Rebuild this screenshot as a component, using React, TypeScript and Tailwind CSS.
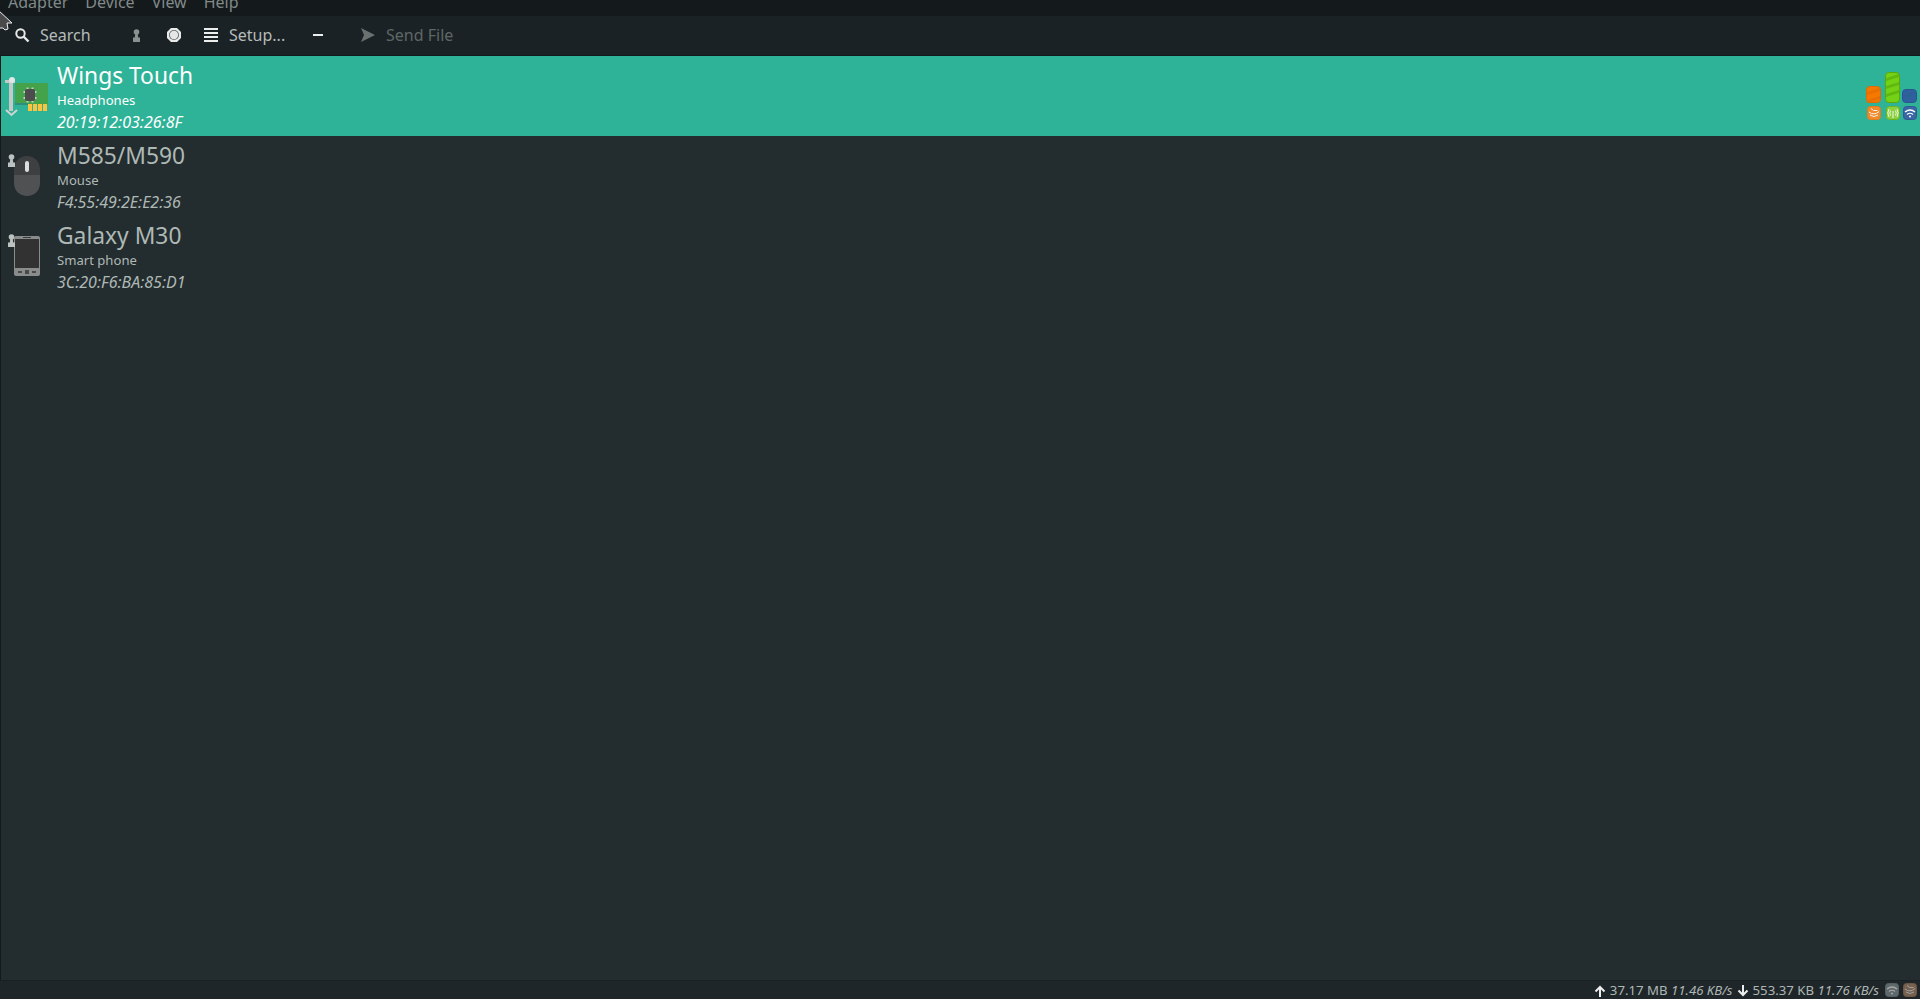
import React from "react";

const devices = [
  { name: "M585/M590", kind: "Mouse", mac: "F4:55:49:2E:E2:36", icon: "mouse" },
  { name: "Galaxy M30", kind: "Smart phone", mac: "3C:20:F6:BA:85:D1", icon: "phone" },
];

const Keyhole = ({ fill = "#b9c0bd" }: { fill?: string }) => (
  <svg width="7" height="13" viewBox="0 0 7 13" className="block">
    <circle cx="3.5" cy="3" r="2.8" fill={fill} />
    <path d="M2.400 4h2.200l.6 4.500H7V13H0V8.500h1.800z" fill={fill} />
  </svg>
);

const CardIcon = () => (
  <svg width="44" height="44" viewBox="0 0 44 44" className="block">
    <rect x="10" y="9" width="33" height="22" fill="#43a24a" />
    <rect x="10" y="29" width="13" height="2" fill="#2f8f7a" />
    <path d="M0 6h10v3H8v28H4V9H0z" fill="#c4c9c7" />
    <circle cx="7" cy="6" r="3" fill="#e3e6e4" />
    <path d="M1 36l5.500 5 5.500-5" fill="none" stroke="#cfd4d2" strokeWidth="2" />
    <g fill="#c3cfc0">
      <rect x="21.500" y="13.500" width="2" height="15" />
      <rect x="26.500" y="13.500" width="2" height="15" />
      <rect x="18.500" y="17" width="13" height="2" />
      <rect x="18.500" y="23" width="13" height="2" />
    </g>
    <rect x="20" y="15" width="10" height="12" rx="2" fill="#4c4c4e" />
    <g fill="#fcc43e">
      <rect x="23" y="30" width="4" height="7" />
      <rect x="28" y="30" width="4" height="7" />
      <rect x="33" y="30" width="4" height="7" />
      <rect x="38" y="30" width="4" height="7" />
    </g>
  </svg>
);

const MouseIcon = () => (
  <svg width="26" height="40" viewBox="0 0 26 40" className="block">
    <path d="M0 14C0 5 6 0 13 0s13 5 13 14v5H0z" fill="#3e3f41" />
    <path d="M0 19h26v8c0 8-6 13-13 13S0 35 0 27z" fill="#505153" />
    <rect x="11" y="5" width="4" height="11" rx="2" fill="#dcdedd" />
  </svg>
);

const PhoneIcon = () => (
  <svg width="26" height="40" viewBox="0 0 26 40" className="block">
    <rect width="26" height="40" rx="2" fill="#8a8c8c" />
    <rect x="1" y="3" width="24" height="29" fill="#323232" />
    <rect x="9" y="1" width="8" height="1" fill="#3a3a3a" />
    <rect x="4" y="35" width="4" height="2" fill="#4a4a4a" />
    <rect x="11" y="34" width="4" height="4" fill="#4a4a4a" />
    <rect x="18" y="35" width="4" height="2" fill="#4a4a4a" />
  </svg>
);

const Bar = ({ h, fill, stripe, edge }: { h: number; fill: string; stripe: string; edge: string }) => (
  <svg width="15" height={h} viewBox={`0 0 15 ${h}`} className="block">
    <rect x="0.500" y="0.500" width="14" height={h - 1} rx="3.500" fill={fill} stroke={edge} />
    {Array.from({ length: Math.floor(h / 8) }).map((_, i) => (
      <path key={i} d={`M1 ${i * 8 + 6}L14 ${i * 8 + 2}v3L1 ${i * 8 + 9}z`} fill={stripe} />
    ))}
  </svg>
);

const Signal = ({ fill, edge, kind }: { fill: string; edge: string; kind: "ripple" | "radio" | "wifi" }) => (
  <svg width="14" height="14" viewBox="0 0 14 14" className="block">
    <rect x="0.500" y="0.500" width="13" height="13" rx="3" fill={fill} stroke={edge} />
    {kind === "ripple" && (
      <g fill="none" stroke="#fff" opacity="0.9">
        <path d="M4 2.500q2 3 6.500 2" />
        <path d="M2 6q5 4 10-.5" />
        <path d="M3 9q4 3 8 0" />
      </g>
    )}
    {kind === "radio" && (
      <g fill="none" stroke="#fff" opacity="0.85">
        <path d="M4.500 4.500q-1.500 2.500 0 5M9.500 4.500q1.500 2.500 0 5" />
        <path d="M3 3q-2.500 4 0 8M11 3q2.500 4 0 8" />
        <path d="M7 5v7" />
      </g>
    )}
    {kind === "wifi" && (
      <g fill="none" stroke="#fff">
        <path d="M2 6q5-4 10 0" strokeWidth="1.300" />
        <path d="M4 8.500q3-2.500 6 0" strokeWidth="1.200" />
        <circle cx="7" cy="10.500" r="1" fill="#fff" stroke="none" />
      </g>
    )}
  </svg>
);

export default function App() {
  return (
    <div className="relative flex flex-col w-full h-[999px] overflow-hidden bg-[#232c2e] text-[#aeb9b6] font-['Noto_Sans',sans-serif]">
      <div className="flex h-4 shrink-0 gap-[17px] overflow-hidden bg-[#14191c] pl-2 text-[16px] leading-5 text-[#808a88]">
        <span className="-mt-[8px]">Adapter</span>
        <span className="-mt-[8px]">Device</span>
        <span className="-mt-[8px]">View</span>
        <span className="-mt-[8px]">Help</span>
      </div>

      <div className="flex h-[39px] shrink-0 items-center bg-[#1b2225] pb-[1px] text-[16px] text-[#b4bcba]">
        <svg width="16" height="16" viewBox="0 0 16 16" className="ml-[14px]" fill="none" stroke="#e6e9e8">
          <circle cx="6.500" cy="6.500" r="4.200" strokeWidth="2" />
          <path d="M9.500 9.500l5 5" strokeWidth="2.400" />
        </svg>
        <span className="ml-[10px] -mt-[1px] w-[93px]">Search</span>
        <Keyhole fill="#8a918f" />
        <svg width="14" height="14" viewBox="0 0 14 14" className="ml-[27px]">
          <path d="M4 0h6l4 4v6l-4 4H4l-4-4V4z" fill="#e8ebea" />
          <circle cx="7" cy="7" r="5" fill="#5b6466" />
          <circle cx="7" cy="7" r="4.200" fill="#e4e7e6" />
        </svg>
        <svg width="14" height="14" viewBox="0 0 14 14" className="ml-[23px]" fill="#eceeed">
          <rect y="0" width="14" height="2" />
          <rect y="4" width="14" height="2" />
          <rect y="8" width="14" height="2" />
          <rect y="12" width="14" height="2" />
        </svg>
        <span className="ml-[11px] -mt-[1px] w-[61px]">Setup...</span>
        <span className="ml-[23px] h-[2px] w-[10px] bg-[#eceeed]" />
        <svg width="14" height="14" viewBox="0 0 14 14" className="ml-[38px]">
          <path d="M0 0l14 7-14 7 3-7z" fill="#6a7170" />
        </svg>
        <span className="ml-[11px] -mt-[1px] text-[#5f6766]">Send File</span>
      </div>

      <div className="flex flex-col flex-1 border-l border-[#14191c] border-t">
        <div className="flex h-20 shrink-0 items-center bg-[#2eb398] text-white">
          <div className="ml-[4px] w-[52px] shrink-0">
            <CardIcon />
          </div>
          <div className="flex flex-col mt-[2px]">
            <span className="text-[22.8px] leading-[29px]">Wings Touch</span>
            <span className="text-[13.1px] leading-[21px]">Headphones</span>
            <span className="text-[16px] leading-[22px] italic">20:19:12:03:26:8F</span>
          </div>
          <div className="ml-auto mr-[3px] flex gap-[3px] items-end">
            <div className="mr-[1px] flex flex-col gap-[3px] items-center">
              <Bar h={17} fill="#f57900" stripe="#e86f00" edge="#e06c00" />
              <Signal fill="#f08a2c" edge="#e67a1a" kind="ripple" />
            </div>
            <div className="flex flex-col gap-[3px] items-center">
              <Bar h={31} fill="#73d216" stripe="#62b80f" edge="#5aa80c" />
              <Signal fill="#8ccf3f" edge="#6eb422" kind="radio" />
            </div>
            <div className="-ml-[1px] flex flex-col gap-[3px] items-center">
              <Bar h={14} fill="#2f619f" stripe="#2f5f99" edge="#2a5592" />
              <Signal fill="#3a67a3" edge="#2f5a95" kind="wifi" />
            </div>
          </div>
        </div>

        {devices.map((d) => (
          <div key={d.name} className="flex h-20 shrink-0 items-center">
            <div className="relative ml-[13px] w-[43px] shrink-0">
              <div className="absolute left-[-6px] top-[-2px]">
                <Keyhole fill="#bcc2c0" />
              </div>
              {d.icon === "mouse" ? <MouseIcon /> : <PhoneIcon />}
            </div>
            <div className="flex flex-col mt-[2px]">
              <span className="text-[22.8px] leading-[29px]">{d.name}</span>
              <span className="text-[13.1px] leading-[21px]">{d.kind}</span>
              <span className="text-[16px] leading-[22px] italic">{d.mac}</span>
            </div>
          </div>
        ))}
      </div>

      <div className="flex h-[19px] shrink-0 items-center justify-end gap-[4px] border-t border-[#1a2023] bg-[#1f2629] pt-[2px] pr-[3px] text-[13.2px] text-[#adb6b4]">
        <svg width="12" height="12" viewBox="0 0 12 12" fill="none" stroke="#eceeed" strokeWidth="2">
          <path d="M6 12V2M1.500 6.500L6 2l4.500 4.500" />
        </svg>
        <span>37.17 MB <i>11.46 KB/s</i></span>
        <svg width="12" height="12" viewBox="0 0 12 12" fill="none" stroke="#eceeed" strokeWidth="2">
          <path d="M6 0v10M1.500 5.500L6 10l4.500-4.500" />
        </svg>
        <span>553.37 KB <i>11.76 KB/s</i></span>
        <span className="ml-[2px] -mt-[2px] opacity-60">
          <Signal fill="#8b9496" edge="#7d8688" kind="wifi" />
        </span>
        <span className="-mt-[2px] opacity-60">
          <Signal fill="#b08a68" edge="#a07a58" kind="ripple" />
        </span>
      </div>

      <svg width="13" height="21" viewBox="0 0 13 21" className="absolute left-0 top-[10px]">
        <path d="M-2 0l14 13H7l1 6-3 1-2-2-5 0z" fill="#4a4a4a" stroke="#eee" />
      </svg>
    </div>
  );
}
